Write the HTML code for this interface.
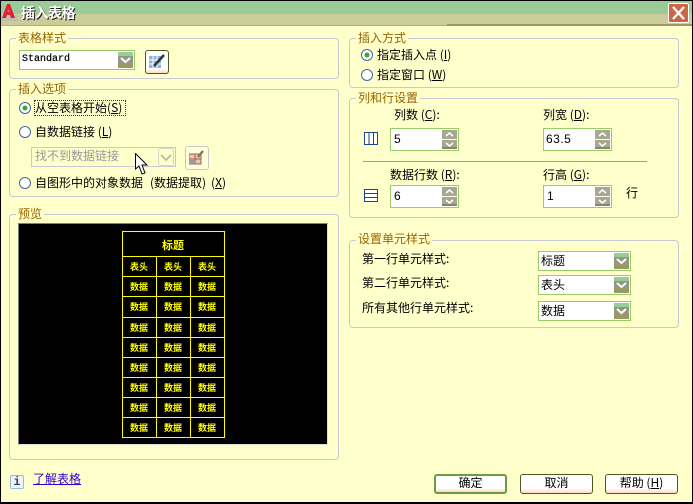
<!DOCTYPE html>
<html lang="zh"><head><meta charset="utf-8"><title>插入表格</title>
<style>
html,body{margin:0;padding:0;background:#ffffcc}
#w{position:relative;width:693px;height:504px;overflow:hidden;background:#ffffcc;font:12px/14px "WenQuanYi Zen Hei","Noto Sans CJK SC",sans-serif;color:#000}
#w div,#w span,#w a,#w svg{position:absolute;display:block;white-space:nowrap;box-sizing:border-box}
.g{border:1px solid #c8c8d0;border-radius:4px;border-width:1px}
.gl{color:#996600;background:#ffffcc;padding:0 2px;height:14px;line-height:14px}
.t{height:14px;line-height:14px}
.c{background:#fff;border:1px solid #99cc66;height:20px}
.s{background:#fff;border:1px solid #99cc66;width:69px;height:23px}
.ib{font:12px/14px "Liberation Sans",sans-serif;left:3px;top:3px}
.b{width:73px;height:20px;border:1px solid #4a5a20;border-radius:3px;text-align:center;line-height:16px;background:linear-gradient(#fff 0,#fff 75%,#ffd8c0 100%)}
u{text-decoration:underline}
</style></head><body><div id="w">
<div style="left:0;top:0;width:693px;height:1px;background:#000"></div>
<div style="left:0;top:0;width:1px;height:504px;background:#000"></div>
<div style="left:692px;top:0;width:1px;height:504px;background:#000"></div>
<div style="left:0;top:502px;width:693px;height:2px;background:#000"></div>
<div style="left:1px;top:1px;width:691px;height:13px;background:#99cc99"></div>
<div style="left:1px;top:14px;width:691px;height:11px;background:#cccc99"></div>
<div style="left:1px;top:25px;width:446px;height:1px;background:#a8b088"></div>
<div style="left:447px;top:24px;width:245px;height:2px;background:#999966"></div>

<div style="left:1px;top:16px;width:17px;height:5px;background:#c0c0b0"></div>
<svg style="left:1px;top:2px" width="16" height="17" viewBox="0 0 16 17"><path d="M1 16 L6 2 L9 2 L14 16 L10 16 L9 13 L6 13 L5 16Z" fill="#dd2233"/><path d="M7 7 L6.500 10 L8.500 10Z" fill="#ee8888"/></svg>
<div style="left:22px;top:7px;color:#222;font-size:14px;font-weight:bold;line-height:14px;letter-spacing:-.5px">插入表格</div>
<div style="left:21px;top:6px;color:#fff;font-size:14px;font-weight:bold;line-height:14px;letter-spacing:-.5px">插入表格</div>
<div style="left:668px;top:3px;width:21px;height:20px;background:#cc6644;border:1px solid #fff;border-radius:2px"></div>
<svg style="left:668px;top:3px" width="21" height="20"><path d="M5 4 L16 16 M16 4 L5 16" stroke="#fff" stroke-width="2.400"/></svg>

<div class="g" style="left:9px;top:38px;width:330px;height:41px"></div>
<div class="gl" style="left:16px;top:31px">表格样式</div>
<div class="c" style="left:19px;top:50px;width:116px"></div>
<div class="t" style="left:22px;top:53px;font:10px/14px 'Liberation Mono',monospace;-webkit-text-stroke:.2px #000">Standard</div>
<svg style="left:118px;top:52px" width="16" height="16"><rect width="15" height="16" fill="#909880"/><rect width="15" height="4" fill="#99cc99"/><rect y="11" width="15" height="5" fill="#999966"/><path d="M3 6 L7.500 10 L12 6" stroke="#fff" stroke-width="2" fill="none"/></svg>
<div style="left:145px;top:50px;width:24px;height:24px;border:1px solid #4a5a20;border-radius:3px;background:linear-gradient(#fff 80%,#ffd8c0)"></div>
<svg style="left:149px;top:54px" width="16" height="16"><rect y="2" width="12" height="12" fill="#8ab4d8"/><path d="M0 6H12M0 10H12M4 2V14M8 2V14" stroke="#fff"/><path d="M5 12 L15 1" stroke="#333" stroke-width="2.500"/></svg>

<div class="g" style="left:9px;top:89px;width:330px;height:108px"></div>
<div class="gl" style="left:16px;top:82px">插入选项</div>
<div style="left:34px;top:100px;width:92px;height:16px;border:1px dotted #333"></div>
<div class="t" style="left:35px;top:101px">从空表格开始(<u>S</u>)</div>
<div class="t" style="left:35px;top:125px">自数据链接 (<u>L</u>)</div>
<div class="t" style="left:35px;top:176px">自图形中的对象数据</div>
<div class="t" style="left:150px;top:176px">(数据提取)</div>
<div class="t" style="left:211px;top:176px">(<u>X</u>)</div>
<svg style="left:19px;top:102px" width="12" height="12"><circle cx="6" cy="6" r="5.500" fill="#fff" stroke="#446699"/><circle cx="6" cy="6" r="2.500" fill="#33aa33"/></svg>
<svg style="left:19px;top:126px" width="12" height="12"><circle cx="6" cy="6" r="5.500" fill="#fff" stroke="#446699"/></svg>
<svg style="left:19px;top:177px" width="12" height="12"><circle cx="6" cy="6" r="5.500" fill="#fff" stroke="#446699"/></svg>
<div style="left:31px;top:147px;width:145px;height:20px;border:1px solid #c8c8d0;background:#ffffcc"></div>
<div class="t" style="left:35px;top:149px;color:#999">找不到数据链接</div>
<svg style="left:158px;top:148px" width="16" height="18"><rect x=".5" y=".5" width="15" height="17" rx="2" fill="#ffffcc" stroke="#d8d8c8"/><path d="M3 7 L8 12 L13 7" stroke="#c0c0b0" stroke-width="2" fill="none"/></svg>
<div style="left:185px;top:146px;width:24px;height:24px;border:1px solid #c8c8c8;border-radius:3px;background:#ffffe0"></div>
<svg style="left:189px;top:150px" width="16" height="16"><rect y="4" width="12" height="10" fill="#e8c8b0" stroke="#a06050"/><path d="M0 9H12M6 4V14" stroke="#a06050"/><rect x="1" y="10" width="5" height="4" fill="#999"/><path d="M9 7 L14 1" stroke="#887755" stroke-width="2.500"/></svg>
<svg style="left:135px;top:153px" width="14" height="23"><path d="M.5 .5 V16 L4 13 L7 21 L10 20 L7 12 L12 12Z" fill="#fff" stroke="#000"/></svg>

<div class="g" style="left:9px;top:214px;width:330px;height:246px"></div>
<div class="gl" style="left:16px;top:207px">预览</div>
<div style="left:18px;top:223px;width:310px;height:222px;border:1px solid #808080;border-bottom-color:#ddd;border-right-color:#ddd"></div>
<svg style="left:19px;top:224px" width="308" height="220" viewBox="19 224 308 220" font-family="'WenQuanYi Zen Hei','Noto Sans CJK SC',sans-serif" font-weight="bold" text-anchor="middle" fill="#ffff00">
<rect x="19" y="224" width="308" height="220" fill="#000"/>
<path d="M122.500 231.500H224.500V437.500H122.500ZM122.500 256.500H224.500M122.500 276.500H224.500M122.500 296.500H224.500M122.500 317.500H224.500M122.500 337.500H224.500M122.500 357.500H224.500M122.500 377.500H224.500M122.500 397.500H224.500M122.500 417.500H224.500M156.500 256.500V437.500M190.500 256.500V437.500" stroke="#ffff00" fill="none"/>
<text x="173" y="249" font-size="11">标题</text>
<g font-size="9"><text x="139" y="270">表头</text><text x="173" y="270">表头</text><text x="207" y="270">表头</text>
<text x="139" y="290">数据</text><text x="173" y="290">数据</text><text x="207" y="290">数据</text>
<text x="139" y="310">数据</text><text x="173" y="310">数据</text><text x="207" y="310">数据</text>
<text x="139" y="331">数据</text><text x="173" y="331">数据</text><text x="207" y="331">数据</text>
<text x="139" y="351">数据</text><text x="173" y="351">数据</text><text x="207" y="351">数据</text>
<text x="139" y="371">数据</text><text x="173" y="371">数据</text><text x="207" y="371">数据</text>
<text x="139" y="391">数据</text><text x="173" y="391">数据</text><text x="207" y="391">数据</text>
<text x="139" y="411">数据</text><text x="173" y="411">数据</text><text x="207" y="411">数据</text>
<text x="139" y="431">数据</text><text x="173" y="431">数据</text><text x="207" y="431">数据</text></g>
</svg>

<div class="g" style="left:349px;top:38px;width:330px;height:50px"></div>
<div class="gl" style="left:356px;top:31px">插入方式</div>
<svg style="left:361px;top:49px" width="12" height="12"><circle cx="6" cy="6" r="5.500" fill="#fff" stroke="#446699"/><circle cx="6" cy="6" r="2.500" fill="#33aa33"/></svg>
<svg style="left:361px;top:69px" width="12" height="12"><circle cx="6" cy="6" r="5.500" fill="#fff" stroke="#446699"/></svg>
<div class="t" style="left:377px;top:48px">指定插入点 (<u>I</u>)</div>
<div class="t" style="left:377px;top:68px">指定窗口 (<u>W</u>)</div>

<div class="g" style="left:349px;top:98px;width:330px;height:120px"></div>
<div class="gl" style="left:356px;top:91px">列和行设置</div>
<div class="t" style="left:394px;top:108px">列数 (<u>C</u>):</div>
<div class="t" style="left:543px;top:108px">列宽 (<u>D</u>):</div>
<div class="t" style="left:390px;top:168px">数据行数 (<u>R</u>):</div>
<div class="t" style="left:543px;top:168px">行高 (<u>G</u>):</div>
<div class="t" style="left:626px;top:186px">行</div>
<div style="left:363px;top:161px;width:284px;height:1px;background:#9a9aa8"></div>
<svg style="left:364px;top:132px" width="14" height="13"><path d="M.5 .5H13.500V12.500H.5ZM5 .5V12.500M9.500 .5V12.500" fill="#fff" stroke="#224488"/></svg>
<svg style="left:364px;top:189px" width="14" height="13"><path d="M.5 .5H13.500V12.500H.5ZM.5 4.500H13.500M.5 8.500H13.500" fill="#fff" stroke="#224488"/></svg>

<div class="s" style="left:390px;top:128px"><span class="ib">5</span></div>
<div class="s" style="left:543px;top:128px"><span class="ib" style="left:2px;letter-spacing:.5px">63.5</span></div>
<div class="s" style="left:390px;top:185px"><span class="ib">6</span></div>
<div class="s" style="left:543px;top:185px"><span class="ib">1</span></div>
<svg style="left:442px;top:130px" width="15" height="19"><rect width="15" height="9" fill="#a8a890"/><rect y="10" width="15" height="9" fill="#a8a890"/><rect y="17" width="15" height="2" fill="#888860"/><path d="M4 6 L7.500 3 L11 6M4 13 L7.500 16 L11 13" stroke="#fff" fill="none" stroke-width="1.500"/></svg>
<svg style="left:595px;top:130px" width="15" height="19"><rect width="15" height="9" fill="#a8a890"/><rect y="10" width="15" height="9" fill="#a8a890"/><rect y="17" width="15" height="2" fill="#888860"/><path d="M4 6 L7.500 3 L11 6M4 13 L7.500 16 L11 13" stroke="#fff" fill="none" stroke-width="1.500"/></svg>
<svg style="left:442px;top:187px" width="15" height="19"><rect width="15" height="9" fill="#a8a890"/><rect y="10" width="15" height="9" fill="#a8a890"/><rect y="17" width="15" height="2" fill="#888860"/><path d="M4 6 L7.500 3 L11 6M4 13 L7.500 16 L11 13" stroke="#fff" fill="none" stroke-width="1.500"/></svg>
<svg style="left:595px;top:187px" width="15" height="19"><rect width="15" height="9" fill="#a8a890"/><rect y="10" width="15" height="9" fill="#a8a890"/><rect y="17" width="15" height="2" fill="#888860"/><path d="M4 6 L7.500 3 L11 6M4 13 L7.500 16 L11 13" stroke="#fff" fill="none" stroke-width="1.500"/></svg>

<div class="g" style="left:349px;top:240px;width:330px;height:88px"></div>
<div class="gl" style="left:356px;top:232px">设置单元样式</div>
<div class="t" style="left:362px;top:252px">第一行单元样式:</div>
<div class="t" style="left:362px;top:276px">第二行单元样式:</div>
<div class="t" style="left:362px;top:301px">所有其他行单元样式:</div>
<div class="c" style="left:538px;top:251px;width:93px"></div><div class="t" style="left:541px;top:254px">标题</div>
<div class="c" style="left:538px;top:275px;width:93px"></div><div class="t" style="left:541px;top:278px">表头</div>
<div class="c" style="left:538px;top:301px;width:93px"></div><div class="t" style="left:541px;top:304px">数据</div>
<svg style="left:614px;top:253px" width="15" height="16"><rect width="15" height="16" fill="#909880"/><rect width="15" height="4" fill="#99cc99"/><rect y="11" width="15" height="5" fill="#999966"/><path d="M3 6 L7.500 10 L12 6" stroke="#fff" stroke-width="2" fill="none"/></svg>
<svg style="left:614px;top:277px" width="15" height="16"><rect width="15" height="16" fill="#909880"/><rect width="15" height="4" fill="#99cc99"/><rect y="11" width="15" height="5" fill="#999966"/><path d="M3 6 L7.500 10 L12 6" stroke="#fff" stroke-width="2" fill="none"/></svg>
<svg style="left:614px;top:303px" width="15" height="16"><rect width="15" height="16" fill="#909880"/><rect width="15" height="4" fill="#99cc99"/><rect y="11" width="15" height="5" fill="#999966"/><path d="M3 6 L7.500 10 L12 6" stroke="#fff" stroke-width="2" fill="none"/></svg>

<div style="left:10px;top:475px;width:14px;height:14px;border:1px solid #99bbdd;border-radius:2px;background:#eef4ff;color:#444;font:bold 12px/12px 'Liberation Mono',monospace;text-align:center">i</div>
<a style="left:33px;top:472px;color:#3300cc;text-decoration:underline;line-height:14px">了解表格</a>
<div class="b" style="left:434px;top:474px;border:2px solid #6c9c40;line-height:14px">确定</div>
<div class="b" style="left:520px;top:474px">取消</div>
<div class="b" style="left:605px;top:474px">帮助 (<u>H</u>)</div>
</div></body></html>
